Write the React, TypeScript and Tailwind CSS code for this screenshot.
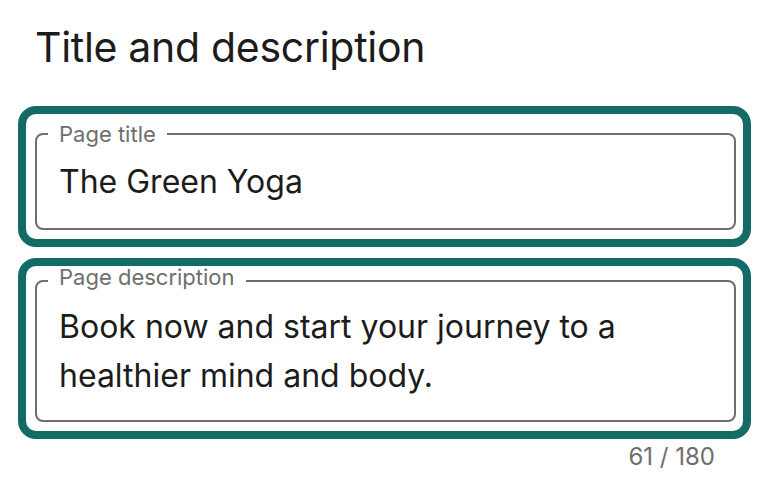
export default function App() {
  return (
    <div className="w-[766px] h-[496px] bg-white pl-[18px] pt-[22px]" style={{ fontFamily: "Inter, 'Noto Sans', sans-serif" }}>
      <h1 className="ml-[17px] text-[41px] leading-[50px] text-[#1c1c1c] tracking-[-0.3px]">Title and description</h1>
      <div className="mt-[34px] w-[733px] flex flex-col gap-[11px]">
        <div className="border-[8px] border-[#136b68] rounded-[18px] pl-[9px] pr-[7px] pt-[7px] pb-[9px]">
          <fieldset className="border-2 border-[#6e6e6e] rounded-[8px] pl-[22px] pr-4 pt-[15px] pb-[26px]">
            <legend className="ml-[-11px] px-[11px] text-[22px] leading-[26px] text-[#6e6e6e]">Page title</legend>
            <div className="text-[32px] leading-[40px] text-[#1c1c1c]">The Green Yoga</div>
          </fieldset>
        </div>
        <div className="border-[8px] border-[#136b68] rounded-[18px] pl-[9px] pr-[7px] pt-[2px] pb-[9px]">
          <fieldset className="border-2 border-[#6e6e6e] rounded-[8px] pl-[22px] pr-4 pt-[8px] pb-[20px]">
            <legend className="ml-[-11px] px-[11px] text-[22px] leading-[26px] text-[#6e6e6e]">
              <span className="relative -top-[4px]">Page description</span>
            </legend>
            <div className="text-[32px] leading-[49px] text-[#1c1c1c]">Book now and start your journey to a<br />healthier mind and body.</div>
          </fieldset>
        </div>
      </div>
      <div className="w-[697px] text-right text-[24px] leading-[30px] text-[#6e6e6e] mt-[3px]">61 / 180</div>
    </div>
  );
}
